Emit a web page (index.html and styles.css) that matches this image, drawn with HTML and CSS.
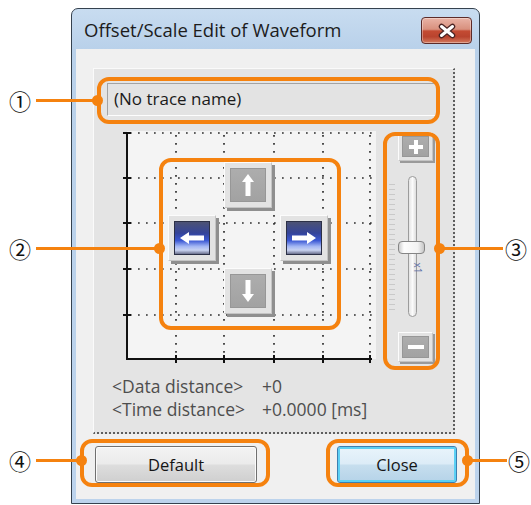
FILE: index.html
```html
<!DOCTYPE html>
<html lang="en">
<head>
  <meta charset="UTF-8" />
  <title>Offset/Scale Edit of Waveform</title>
  <link rel="stylesheet" href="styles.css">
</head>
<body>
  <div class="stage">
    <div class="window">
      <div class="titlebar">
        <span class="title">Offset/Scale Edit of Waveform</span>
        <button class="close-x">
          <svg width="20" height="16" viewBox="0 0 20 16">
            <path d="M4.5 3.5L15.5 12.5M15.5 3.5L4.5 12.5" stroke="#4a2424" stroke-width="5.5" stroke-linecap="round"/>
            <path d="M4.5 3.5L15.5 12.5M15.5 3.5L4.5 12.5" stroke="#fff" stroke-width="3" stroke-linecap="round"/>
          </svg>
        </button>
      </div>

      <div class="client">
        <div class="panel">
          <div class="trace">(No trace name)</div>

          <div class="plot-row">
            <div class="graph">
              <svg class="grid" width="254" height="234" viewBox="0 0 254 234">
                <rect x="5" y="2" width="249" height="228" fill="#f4f4f4"/>
                <g stroke="#2e2e2e" stroke-width="1.7" stroke-dasharray="1.7 6.3" fill="none">
                  <path d="M8 4H252M8 49H252M8 94H252M8 140H252M8 186H252"/>
                  <path d="M54 6V228M102 6V228M152 6V228M201 6V228M248 6V228"/>
                </g>
                <g stroke="#111" stroke-width="2" fill="none">
                  <path d="M5 3V231M4 230H250"/>
                  <path d="M1 4H9M1 49H9M1 94H9M1 140H9M1 186H9"/>
                  <path d="M54 226V234M102 226V234M152 226V234M201 226V234M248 226V234"/>
                </g>
              </svg>

              <div class="pad">
                <div class="nudge up">
                  <div class="face">
                    <svg width="20" height="24" viewBox="0 0 20 24"><polygon points="10,1 16,9 12.5,9 12.5,23 7.5,23 7.5,9 4,9" fill="#fff"/></svg>
                  </div>
                </div>
                <div class="nudge left blue">
                  <div class="face">
                    <svg width="26" height="14" viewBox="0 0 26 14"><polygon points="1,7 10,1 10,4.5 25,4.5 25,9.5 10,9.5 10,13" fill="#fff"/></svg>
                  </div>
                </div>
                <div class="nudge right blue">
                  <div class="face">
                    <svg width="26" height="14" viewBox="0 0 26 14"><polygon points="25,7 16,1 16,4.5 1,4.5 1,9.5 16,9.5 16,13" fill="#fff"/></svg>
                  </div>
                </div>
                <div class="nudge down">
                  <div class="face">
                    <svg width="20" height="24" viewBox="0 0 20 24"><polygon points="10,23 16,15 12.5,15 12.5,1 7.5,1 7.5,15 4,15" fill="#fff"/></svg>
                  </div>
                </div>
              </div>
            </div>

            <div class="slider">
              <div class="nudge step">
                <div class="face">
                  <svg width="16" height="16" viewBox="0 0 16 16"><path d="M8 1V15M1 8H15" stroke="#fff" stroke-width="4"/></svg>
                </div>
              </div>
              <div class="scale">
                <div class="ticks"></div>
                <div class="track"></div>
                <div class="thumb"></div>
                <span class="zoom">x1</span>
              </div>
              <div class="nudge step">
                <div class="face">
                  <svg width="18" height="6" viewBox="0 0 18 6"><path d="M1 3H17" stroke="#fff" stroke-width="4"/></svg>
                </div>
              </div>
            </div>
          </div>

          <div class="info">
            <span>&lt;Data distance&gt;</span><span>+0</span>
            <span>&lt;Time distance&gt;</span><span>+0.0000 [ms]</span>
          </div>
        </div>

        <div class="actions">
          <button class="btn">Default</button>
          <button class="btn primary">Close</button>
        </div>
      </div>
    </div>

    <!-- callouts -->
    <div class="note-box" style="left:97px;top:77px;width:343px;height:47px"></div>
    <div class="note-line" style="left:36px;top:99px;width:62px"></div>
    <div class="note-dot" style="left:92px;top:95px"></div>
    <span class="note-num" style="left:9px;top:89px">①</span>

    <div class="note-box" style="left:159px;top:158px;width:182px;height:172px"></div>
    <div class="note-line" style="left:36px;top:247px;width:124px"></div>
    <div class="note-dot" style="left:154px;top:243px"></div>
    <span class="note-num" style="left:9px;top:237px">②</span>

    <div class="note-box" style="left:383px;top:132px;width:57px;height:238px"></div>
    <div class="note-line" style="left:439px;top:247px;width:64px"></div>
    <div class="note-dot" style="left:434px;top:243px"></div>
    <span class="note-num" style="left:505px;top:237px">③</span>

    <div class="note-box" style="left:80px;top:439px;width:190px;height:48px"></div>
    <div class="note-line" style="left:36px;top:459px;width:46px"></div>
    <div class="note-dot" style="left:76px;top:455px"></div>
    <span class="note-num" style="left:9px;top:449px">④</span>

    <div class="note-box" style="left:326px;top:439px;width:143px;height:48px"></div>
    <div class="note-line" style="left:467px;top:459px;width:40px"></div>
    <div class="note-dot" style="left:462px;top:455px"></div>
    <span class="note-num" style="left:508px;top:449px">⑤</span>
  </div>
</body>
</html>
```

FILE: styles.css
```css
* {
  box-sizing: border-box;
}
body {
  margin: 0;
  background: #fff;
  font-family: "Open Sans", "Noto Sans", sans-serif;
}
.stage {
  position: relative;
  width: 531px;
  height: 505px;
  overflow: hidden;
}

/* window frame */
.window {
  margin: 8px 0 0 71px;
  width: 409px;
  height: 496px;
  border: 1px solid #35424f;
  border-radius: 7px 7px 0 0;
  background: linear-gradient(#c8dcf0, #b9d1ea 40px, #bcd3ec);
  padding: 0 4px 4px;
  display: flex;
  flex-direction: column;
}
.titlebar {
  height: 40px;
  display: flex;
  justify-content: space-between;
  align-items: flex-start;
}
.title {
  margin: 10px 0 0 8px;
  font-size: 18.5px;
  line-height: 22px;
  color: #1c1c1c;
}
.close-x {
  width: 51px;
  height: 27px;
  margin: 8px 3px 0 0;
  padding: 0;
  border: 1px solid #5c2b29;
  border-radius: 4px;
  background: linear-gradient(#e9b3a6, #d8907e 45%, #c44b33 52%, #b9432e 75%, #d47a5e);
  box-shadow: inset 0 0 0 1px rgba(255, 255, 255, 0.35);
  display: flex;
  align-items: center;
  justify-content: center;
}
.client {
  flex: 1;
  background: #f0f0f0;
  padding: 19px 0 0 17px;
}

/* main panel */
.panel {
  width: 362px;
  height: 366px;
  background: #e4e4e4;
  border-top: 1px solid #fafafa;
  border-left: 1px solid #fafafa;
  border-right: 2px dotted #5e5e5e;
  border-bottom: 2px dotted #5e5e5e;
  padding: 14px 0 0 13px;
}
.trace {
  width: 330px;
  height: 33px;
  border: 1px solid;
  border-color: #a3a3a3 #fdfdfd #fdfdfd #a3a3a3;
  background: #e3e3e3;
  padding-left: 6px;
  font-size: 17px;
  line-height: 30px;
  color: #1a1a1a;
}
.plot-row {
  display: flex;
  margin: 13px 0 0 15px;
}
.graph {
  display: grid;
  width: 254px;
  height: 234px;
}
.graph > * {
  grid-area: 1 / 1;
}
.pad {
  margin: 33px 0 0 46px;
  display: grid;
  grid-template-columns: 48px 48px 48px;
  grid-template-rows: 46px 46px 46px;
  column-gap: 8px;
  row-gap: 7px;
  align-self: start;
  justify-self: start;
}
.up { grid-column: 2; grid-row: 1; }
.left { grid-column: 1; grid-row: 2; }
.right { grid-column: 3; grid-row: 2; }
.down { grid-column: 2; grid-row: 3; }

.nudge {
  width: 48px;
  height: 46px;
  background: #e3e3e3;
  border: 1px solid;
  border-color: #fcfcfc #c4c4c4 #c4c4c4 #fcfcfc;
  box-shadow: 3px 3px 0 #8f8f8f;
  padding: 5px;
}
.face {
  width: 100%;
  height: 100%;
  background: linear-gradient(#adadad, #a2a2a2);
  border: 1px solid #979797;
  display: flex;
  align-items: center;
  justify-content: center;
}
.blue .face {
  background: linear-gradient(#4c5274, #34449a 35%, #3b58d4 58%, #a3b6f4 76%, #c9d3f1 88%, #6a6f8c);
  border-color: #2c3046;
}

/* zoom slider */
.slider {
  width: 50px;
  margin: 3px 0 0 10px;
}
.step {
  width: 35px;
  height: 29px;
  margin-left: 12px;
  padding: 3px;
  box-shadow: 2px 2px 0 #9a9a9a;
}
.step + .scale {
  margin-top: 15px;
}
.scale + .step {
  margin-top: 15px;
  height: 30px;
}
.scale {
  position: relative;
  height: 141px;
  display: flex;
}
.ticks {
  width: 6px;
  height: 127px;
  margin: 8px 0 0 3px;
  background: repeating-linear-gradient(#c9c9c9 0 1px, transparent 1px 5px);
}
.track {
  width: 9px;
  height: 141px;
  margin-left: 13px;
  border: 1px solid #9c9c9c;
  border-radius: 5px;
  background: linear-gradient(90deg, #e4e4e4, #fbfbfb, #dedede);
}
.thumb {
  position: absolute;
  left: 12px;
  top: 65px;
  width: 27px;
  height: 13px;
  border: 1px solid #858585;
  border-radius: 4px;
  background: linear-gradient(90deg, #cfcfcf, #fdfdfd 20%, #f2f2f2 75%, #c6c6c6);
}
.zoom {
  position: absolute;
  left: 27px;
  top: 87px;
  font-size: 10px;
  line-height: 10px;
  color: #5d6fa6;
  transform: rotate(90deg);
}

/* readouts */
.info {
  margin: 12px 0 0 5px;
  display: grid;
  grid-template-columns: 150px auto;
  font-size: 17.5px;
  line-height: 23px;
  color: #4e4e4e;
}

/* dialog buttons */
.actions {
  display: flex;
  gap: 80px;
  margin: 12px 0 0 2px;
}
.btn {
  width: 162px;
  height: 37px;
  border: 1px solid #707070;
  border-radius: 3px;
  background: linear-gradient(#f3f3f3, #ebebeb 48%, #dddddd 52%, #cfcfcf);
  box-shadow: inset 0 0 0 1px #fbfbfb;
  font-family: "Open Sans", "Noto Sans", sans-serif;
  font-size: 16.5px;
  color: #151515;
}
.btn.primary {
  width: 120px;
  border-color: #3c7fb1;
  background: linear-gradient(#e9f4fb, #dcecf7 48%, #c6deee 52%, #b5d3e8);
  box-shadow: inset 0 0 0 2px #5cd0f4;
}

/* callouts */
.note-box {
  position: absolute;
  border: 4px solid #f5820f;
  border-radius: 12px;
}
.note-line {
  position: absolute;
  height: 3px;
  background: #f5820f;
}
.note-dot {
  position: absolute;
  width: 11px;
  height: 11px;
  border-radius: 50%;
  background: #f5820f;
}
.note-num {
  position: absolute;
  font-family: "Noto Sans CJK JP", "DejaVu Sans", sans-serif;
  font-size: 22px;
  line-height: 22px;
  color: #111;
}
```
